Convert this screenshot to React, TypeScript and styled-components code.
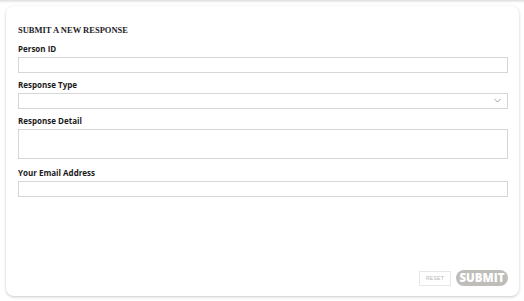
import styled, { createGlobalStyle } from "styled-components";

const GlobalStyle = createGlobalStyle`
  html, body {
    margin: 0;
    padding: 0;
    background: #ffffff;
  }
  body {
    font-family: "Open Sans", "Liberation Sans", sans-serif;
    overflow: hidden;
  }
`;

const Page = styled.div`
  height: 301px;
  box-sizing: border-box;
  padding: 6px 5px 5px 6px;
  box-shadow: inset 0 3px 3px -2px rgba(0, 0, 0, 0.18);
  display: flex;
`;

const Card = styled.div`
  flex: 1;
  background: #fff;
  border-radius: 8px;
  box-shadow: 0 1px 3px rgba(0, 0, 0, 0.22);
  padding: 18px 11px 10px 12px;
  display: flex;
  flex-direction: column;
`;

const Title = styled.h2`
  margin: 0 0 7px;
  font-family: "Liberation Serif", "DejaVu Serif", serif;
  font-weight: bold;
  font-size: 8.5px;
  line-height: 12px;
  color: #1c1c28;
`;

const Field = styled.div<{ $gap?: number }>`
  display: flex;
  flex-direction: column;
  margin-bottom: ${(p) => p.$gap ?? 6}px;
`;

const Label = styled.label`
  font-size: 8px;
  font-weight: 700;
  line-height: 12px;
  color: #1b1b1b;
  margin-bottom: 2px;
`;

const inputBase = `
  box-sizing: border-box;
  width: 100%;
  border: 1px solid #d6d6d6;
  background: #fff;
  margin: 0;
  padding: 0 4px;
  font-family: "Open Sans", sans-serif;
  font-size: 8px;
  outline: none;
`;

const Input = styled.input`
  ${inputBase}
  height: 16px;
`;

const TextArea = styled.textarea`
  ${inputBase}
  height: 30px;
  resize: none;
  display: block;
`;

const SelectWrap = styled.div`
  position: relative;
  height: 16px;
  box-sizing: border-box;
  border: 1px solid #d6d6d6;
`;

const Chevron = styled.svg`
  position: absolute;
  right: 6px;
  top: 4px;
`;

const Footer = styled.div`
  margin-top: auto;
  display: flex;
  justify-content: flex-end;
  align-items: center;
  gap: 5px;
`;

const ResetButton = styled.button`
  width: 32px;
  height: 15px;
  border: 1px solid #e6e6e6;
  background: #fff;
  color: #b3b3b3;
  font-family: "Liberation Sans", sans-serif;
  font-size: 5px;
  letter-spacing: 0.3px;
  padding: 0;
`;

const SubmitButton = styled.button`
  height: 16px;
  width: 52px;
  border: none;
  border-radius: 8px;
  background: #bebdb9;
  color: #fff;
  font-family: "Open Sans", sans-serif;
  font-weight: 800;
  font-size: 11.5px;
  padding: 0;
  line-height: 16px;
`;

export default function App() {
  return (
    <>
      <GlobalStyle />
      <Page>
        <Card>
          <Title>SUBMIT A NEW RESPONSE</Title>
          <Field>
            <Label>Person ID</Label>
            <Input />
          </Field>
          <Field>
            <Label>Response Type</Label>
            <SelectWrap>
              <Chevron width="7" height="5" viewBox="0 0 7 5">
                <path d="M0.5 1 L3.5 4 L6.5 1" fill="none" stroke="#8a8a8a" strokeWidth="0.8" />
              </Chevron>
            </SelectWrap>
          </Field>
          <Field $gap={8}>
            <Label>Response Detail</Label>
            <TextArea />
          </Field>
          <Field>
            <Label>Your Email Address</Label>
            <Input />
          </Field>
          <Footer>
            <ResetButton>RESET</ResetButton>
            <SubmitButton>SUBMIT</SubmitButton>
          </Footer>
        </Card>
      </Page>
    </>
  );
}
